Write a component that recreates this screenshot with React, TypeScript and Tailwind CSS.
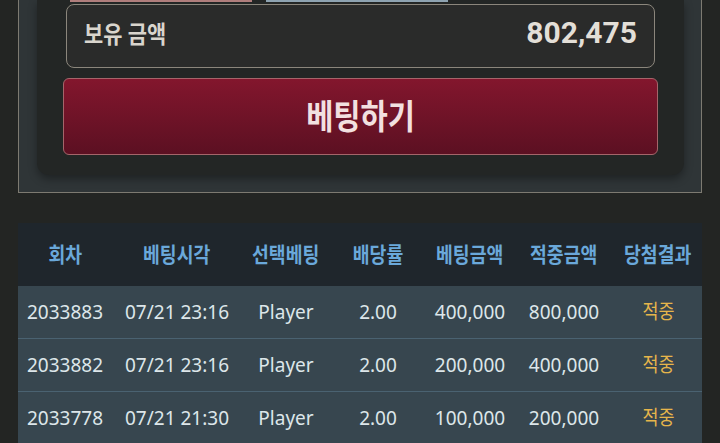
import React from "react";

type BetRow = {
  round: string;
  time: string;
  pick: string;
  odds: string;
  amount: string;
  win: string;
  result: string;
};

const rows: BetRow[] = [
  { round: "2033883", time: "07/21 23:16", pick: "Player", odds: "2.00", amount: "400,000", win: "800,000", result: "적중" },
  { round: "2033882", time: "07/21 23:16", pick: "Player", odds: "2.00", amount: "200,000", win: "400,000", result: "적중" },
  { round: "2033778", time: "07/21 21:30", pick: "Player", odds: "2.00", amount: "100,000", win: "200,000", result: "적중" },
];

const headers = ["회차", "베팅시각", "선택베팅", "배당률", "베팅금액", "적중금액", "당첨결과"];

// 한글 폭을 좁게
const Ko: React.FC<{ children: React.ReactNode; className?: string }> = ({ children, className }) => (
  <span className={`inline-block scale-x-[0.87] whitespace-nowrap ${className ?? ""}`}>{children}</span>
);

const cols = "grid grid-cols-[94px_130px_88px_96px_88px_100px_88px]";

export default function App() {
  return (
    <div
      className="h-[443px] w-[720px] overflow-hidden bg-[#232523]"
      style={{ fontFamily: '"Noto Sans", "Noto Sans CJK KR", sans-serif' }}
    >
      {/* 베팅 패널 */}
      <div className="mx-[18px] border-x border-b border-[#7d7a71] bg-[#2f3537] pl-[18px] pr-[17px] pb-[17px]">
        <div className="rounded-b-xl bg-[#232625] px-[26px] pb-[20px] shadow-[0_4px_8px_rgba(0,0,0,0.35)]">
          {/* 상단 버튼 하단 라인 */}
          <div className="flex h-[2px] gap-[14px] pl-[7px]">
            <div className="w-[182px] bg-[#b07e7c]" />
            <div className="w-[182px] bg-[#8ea3b1]" />
          </div>

          {/* 보유 금액 */}
          <div className="mx-[3px] mt-[2px] flex h-[64px] items-center justify-between rounded-lg border border-[#8b867c] bg-[#2a2b2a] pb-[4px] pl-[17px] pr-[17px]">
            <Ko className="origin-left text-[24px] font-bold text-[#d9d5cd]">보유 금액</Ko>
            <span
              className="-mt-[3px] text-[30px] font-bold leading-none text-[#e3dfd7]"
              style={{ fontFamily: "Roboto, sans-serif" }}
            >
              802,475
            </span>
          </div>

          {/* 베팅하기 버튼 */}
          <button className="mt-[10px] flex h-[77px] w-full items-center justify-center rounded-md border border-[#a4656a] bg-gradient-to-b from-[#83162d] to-[#5c1022]">
            <Ko className="text-[34px] font-bold text-[#f2e0e0]">베팅하기</Ko>
          </button>
        </div>
      </div>

      {/* 베팅 내역 */}
      <div className="mx-[18px] mt-[30px]">
        <div className={`${cols} h-[63px] items-center bg-[#1f262c] text-center`}>
          {headers.map((h) => (
            <div key={h}>
              <Ko className="text-[21px] font-bold text-[#6aa8da]">{h}</Ko>
            </div>
          ))}
        </div>
        {rows.map((r, idx) => (
          <div
            key={idx}
            className={`${cols} h-[53px] items-center border-b border-[#4a6271] bg-[#37464f] text-center text-[19px] text-[#dde6ea]`}
          >
            <div>{r.round}</div>
            <div>{r.time}</div>
            <div>{r.pick}</div>
            <div>{r.odds}</div>
            <div>{r.amount}</div>
            <div>{r.win}</div>
            <div>
              <Ko className="text-[20px] text-[#e6b54b]">{r.result}</Ko>
            </div>
          </div>
        ))}
      </div>
    </div>
  );
}
